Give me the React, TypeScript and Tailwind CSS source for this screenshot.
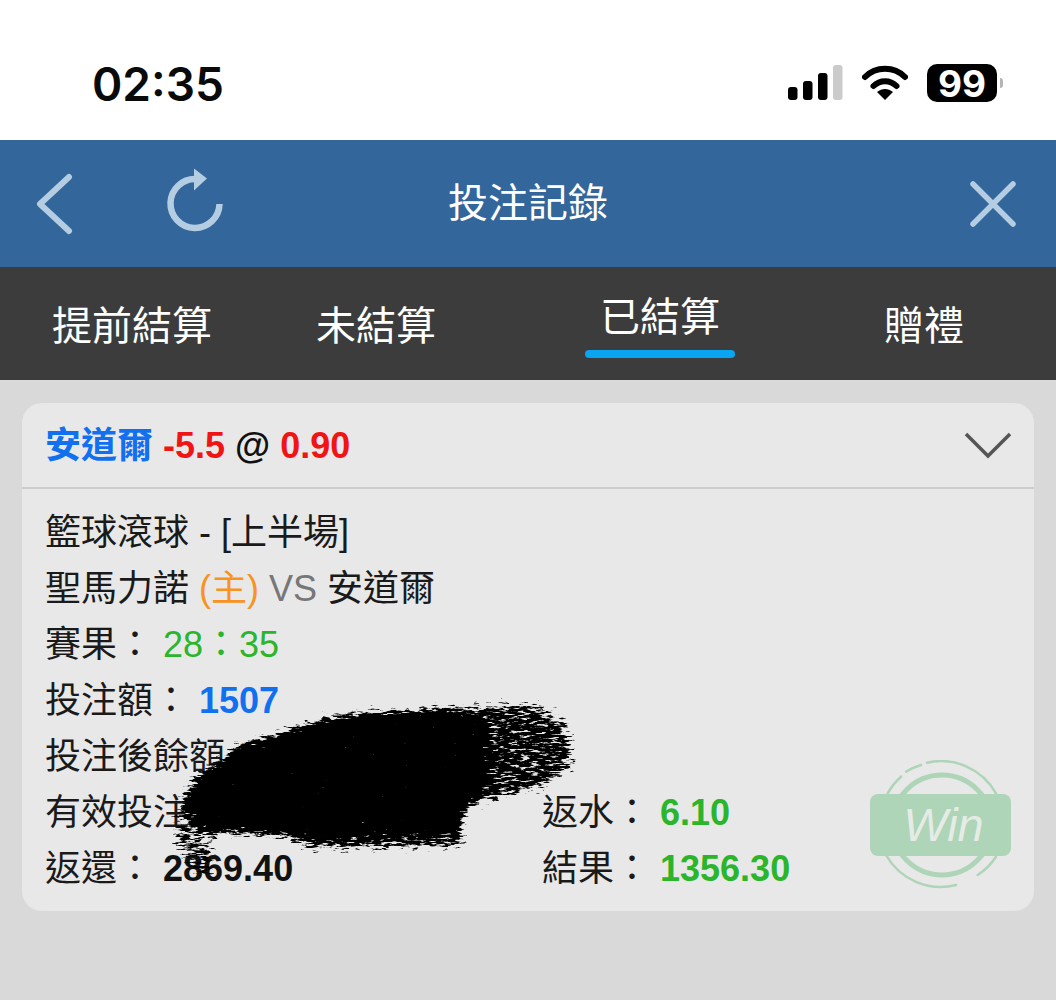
const sans = "font-['Liberation_Sans','Noto_Sans_CJK_TC',sans-serif]";
const inter = "font-['Inter','Liberation_Sans',sans-serif]";

function StatusIcons() {
  return (
    <div className="flex items-center">
      <svg width="55" height="36" viewBox="0 0 55 36" className="mr-[19px]">
        <rect x="0" y="22" width="9.5" height="13" rx="3" fill="#000" />
        <rect x="15" y="16" width="9.5" height="19" rx="3" fill="#000" />
        <rect x="30" y="8" width="9.5" height="27" rx="3" fill="#000" />
        <rect x="45" y="0" width="9.5" height="35" rx="3" fill="#cbcbcb" />
      </svg>
      <svg width="46" height="36" viewBox="0 0 46 36" className="mr-[19px]">
        <path d="M3 12 C14 1 32 1 43 12" fill="none" stroke="#000" strokeWidth="6" strokeLinecap="round" />
        <path d="M11.5 21 C18 14.5 28 14.5 34.5 21" fill="none" stroke="#000" strokeWidth="6" strokeLinecap="round" />
        <path d="M23 35 L15 27 C20 23 26 23 31 27 Z" fill="#000" />
      </svg>
      <div className={`${inter} flex h-[38px] w-[70px] items-center justify-center rounded-[10px] bg-black text-[37px] leading-none font-bold text-white`}>
        99
      </div>
      <div className="ml-[3px] h-[10px] w-[3px] rounded-r-full bg-[#b5b5b5]" />
    </div>
  );
}

function Tab({ label, active }: { label: string; active?: boolean }) {
  return (
    <div className="relative flex h-full items-center justify-center text-[40px] text-white">
      <span className={active ? "mb-[14px]" : "mt-[5px]"}>{label}</span>
      {active && (
        <div className="absolute bottom-[22px] left-1/2 h-[8px] w-[150px] -translate-x-1/2 rounded-full bg-[#0aa5f2]" />
      )}
    </div>
  );
}

function Row({ children }: { children: React.ReactNode }) {
  return <div className="h-[56px] leading-[56px] whitespace-pre">{children}</div>;
}

function WinStamp() {
  return (
    <div className="absolute top-[357px] right-[22px] h-[130px] w-[142px]">
      <svg width="142" height="130" viewBox="0 0 142 130" className="absolute inset-0">
        <circle cx="72" cy="65" r="50" fill="none" stroke="#aed5b7" strokeWidth="5" />
        <path
          d="M17.7 33.3 A63 63 0 0 1 31 16.7 M36 11.7 A63 63 0 0 1 51 5 M57 2.7 A63 63 0 0 1 126 33.3 M16 95 A63 63 0 0 0 86 125 M107.7 115 A63 63 0 0 0 126 96.7"
          fill="none"
          stroke="#aed5b7"
          strokeWidth="2.5"
          strokeLinecap="round"
        />
      </svg>
      <div className="absolute top-[34px] left-0 flex h-[62px] w-[141px] items-center justify-center rounded-[8px] bg-[#aed5b7] pl-[6px] text-[47px] text-[#e6ebe6] italic">
        Win
      </div>
    </div>
  );
}

// the scribble hiding the balance: blurred shapes, broken up with noise where they are thin
function Smudge() {
  return (
    <svg width="460" height="220" viewBox="0 0 460 220" className="absolute top-[277px] left-[118px]">
      <defs>
        <filter id="ink" x="-5%" y="-10%" width="110%" height="120%" colorInterpolationFilters="sRGB">
          <feGaussianBlur in="SourceAlpha" stdDeviation="6" result="soft" />
          <feTurbulence type="fractalNoise" baseFrequency="0.1 0.45" numOctaves="4" seed="7" />
          <feColorMatrix type="matrix" values="0 0 0 0 0  0 0 0 0 0  0 0 0 0 0  0 0 0 1.1 0" result="noise" />
          <feComposite in="soft" in2="noise" operator="arithmetic" k1="0" k2="1" k3="1" k4="-1" />
          <feComponentTransfer>
            <feFuncA type="linear" slope="6" />
          </feComponentTransfer>
          <feGaussianBlur stdDeviation="0.6" />
        </filter>
      </defs>
      <g filter="url(#ink)">
        <path d="M52 100 L100 64 L200 34 L300 28 L345 42 L348 100 L330 124 L318 150 L150 156 L64 152 L46 130 Z" fill="#000" />
        <path d="M300 26 L400 22 L430 46 L434 90 L400 110 L330 126 L300 100 Z" fill="#000" fillOpacity="0.68" />
        <path d="M130 148 L326 146 L322 168 L170 170 Z" fill="#000" fillOpacity="0.72" />
        <path d="M28 158 L44 104 L72 150 L78 196 L58 200 Z" fill="#000" fillOpacity="0.55" />
      </g>
    </svg>
  );
}

export default function App() {
  return (
    <div className={`${sans} h-[1000px] w-[1056px] overflow-hidden bg-[#d9d9d9]`}>
      <div className="flex h-[140px] items-center justify-between bg-white pr-[53px] pl-[92px]">
        <span className={`${inter} mt-[27px] text-[46px] leading-none font-semibold text-[#0a0a0a]`}>02:35</span>
        <div className="mt-[26px]">
          <StatusIcons />
        </div>
      </div>

      <div className="grid h-[127px] grid-cols-[1fr_auto_1fr] items-center bg-[#33669a] px-[36px]">
        <div className="flex items-center gap-[92px]">
          <svg width="38" height="62" viewBox="0 0 38 62">
            <path d="M33 4 L4 31 L33 58" fill="none" stroke="#b5cde2" strokeWidth="6" strokeLinecap="round" strokeLinejoin="round" />
          </svg>
          <svg width="58" height="72" viewBox="0 0 58 72">
            <path d="M30 11 A24.5 24.5 0 1 0 53.5 36" fill="none" stroke="#b5cde2" strokeWidth="6.5" />
            <path d="M28 0.5 L41 10.5 L28 22.5 Z" fill="#b5cde2" />
          </svg>
        </div>
        <span className="mb-[2px] text-[40px] leading-none text-white">投注記錄</span>
        <svg width="46" height="46" viewBox="0 0 46 46" className="mr-[4px] justify-self-end">
          <path d="M3 3 L43 43 M43 3 L3 43" fill="none" stroke="#b5cde2" strokeWidth="5.5" strokeLinecap="round" />
        </svg>
      </div>

      <div className="grid h-[113px] grid-cols-[264px_224px_344px_184px] bg-[#3c3c3c]">
        <Tab label="提前結算" />
        <Tab label="未結算" />
        <Tab label="已結算" active />
        <Tab label="贈禮" />
      </div>

      <div className="relative mx-[22px] mt-[23px] h-[508px] rounded-[20px] bg-[#e8e8e8] text-[36px] text-[#1a1a1a]">
        <div className="flex h-[86px] items-center justify-between border-b-2 border-[#cdcdcd] pr-[22px] pl-[23px] font-bold">
          <div className="mt-[2px] whitespace-pre">
            <span className="text-[#1070f0]">安道爾 </span>
            <span className="text-[#f01414]">-5.5 </span>
            <span className="text-[#111]">@ </span>
            <span className="text-[#f01414]">0.90</span>
          </div>
          <svg width="48" height="28" viewBox="0 0 48 28">
            <path d="M2 3 L24 25 L46 3" fill="none" stroke="#555" strokeWidth="3.5" />
          </svg>
        </div>

        <div className="px-[23px] pt-[16px]">
          <Row>籃球滾球 - [上半場]</Row>
          <Row>
            聖馬力諾 <span className="text-[#f7931e]">(主)</span> <span className="text-[#777]">VS</span> 安道爾
          </Row>
          <Row>
            賽果： <span className="text-[#2bb52b]">28：35</span>
          </Row>
          <Row>
            投注額： <b className="text-[#1070f0]">1507</b>
          </Row>
          <Row>投注後餘額：</Row>
          <div className="grid grid-cols-[497px_1fr]">
            <Row>有效投注：</Row>
            <Row>
              返水： <b className="text-[#2bb52b]">6.10</b>
            </Row>
            <Row>
              返還： <b className="text-[#111]">2869.40</b>
            </Row>
            <Row>
              結果： <b className="text-[#2bb52b]">1356.30</b>
            </Row>
          </div>
        </div>

        <WinStamp />
        <Smudge />
      </div>
    </div>
  );
}
